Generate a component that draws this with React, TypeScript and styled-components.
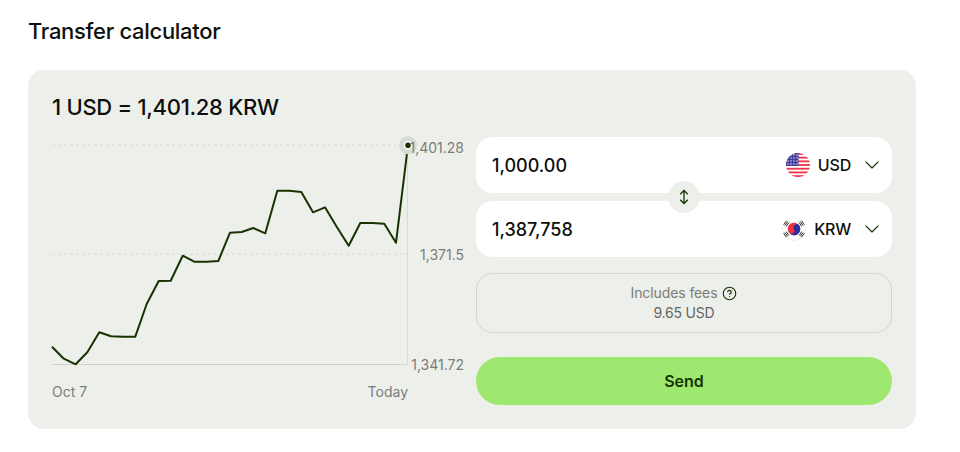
// App.tsx
import React from 'react';
import styled, { createGlobalStyle } from 'styled-components';
import { ChevronDown, CircleHelp } from 'lucide-react';

const GlobalStyle = createGlobalStyle`
  html, body {
    margin: 0;
    padding: 0;
    background: #fff;
    font-family: Inter, "Liberation Sans", sans-serif;
    color: #0e0f0c;
  }
  * {
    box-sizing: border-box;
  }
`;

const Page = styled.div`
  width: 960px;
  height: 452px;
  padding: 16px 44px 0 28px;
  overflow: hidden;
`;

const Title = styled.h1`
  margin: 0 0 24px;
  height: 30px;
  font-size: 22px;
  line-height: 30px;
  font-weight: 500;
  letter-spacing: -0.3px;
`;

const Card = styled.section`
  height: 359px;
  padding: 24px;
  background: #edefeb;
  border-radius: 16px;
`;

const Rate = styled.h2`
  margin: 0 0 17px;
  height: 26px;
  font-size: 22px;
  line-height: 26px;
  font-weight: 500;
  letter-spacing: -0.3px;
`;

const Columns = styled.div`
  display: grid;
  grid-template-columns: 412px 416px;
  column-gap: 12px;
`;

const Chart = styled.div`
  position: relative;
  display: flex;
  flex-direction: column;
`;

const Plot = styled.svg`
  display: block;
  width: 412px;
  height: 236px;
  overflow: visible;
`;

const YAxis = styled.div`
  position: absolute;
  top: 0;
  right: 0;
  height: 238px;
  display: flex;
  flex-direction: column;
  justify-content: space-between;
  align-items: flex-end;
  padding: 1px 0 0;
`;

const AxisLabel = styled.span<{ $lift?: number }>`
  font-size: 14px;
  line-height: 20px;
  color: #7b7d7a;
  margin-bottom: ${props => props.$lift ?? 0}px;
`;

const XAxis = styled.div`
  width: 356px;
  margin-top: 9px;
  display: flex;
  justify-content: space-between;
  font-size: 14px;
  line-height: 20px;
  color: #7b7d7a;
`;

const Form = styled.div`
  display: flex;
  flex-direction: column;
`;

const Inputs = styled.div`
  position: relative;
  display: flex;
  flex-direction: column;
  gap: 8px;
`;

const AmountRow = styled.div`
  height: 56px;
  padding: 0 8px 0 16px;
  display: flex;
  align-items: center;
  justify-content: space-between;
  background: #fff;
  border-radius: 16px;
`;

const Amount = styled.span`
  padding-top: 2px;
  font-size: 18px;
  font-weight: 500;
  line-height: 24px;
`;

const CurrencyPicker = styled.div`
  display: flex;
  align-items: center;
  gap: 8px;
  color: #163300;
`;

const CurrencyCode = styled.span`
  font-size: 16px;
  font-weight: 500;
  line-height: 20px;
  letter-spacing: -0.2px;
  color: #0e0f0c;
  margin-right: 1px;
`;

const Flag = styled.svg`
  display: block;
  width: 24px;
  height: 24px;
  border-radius: 50%;
`;

const SwapButton = styled.div`
  position: absolute;
  left: 192px;
  top: 44px;
  width: 32px;
  height: 32px;
  display: flex;
  align-items: center;
  justify-content: center;
  border-radius: 50%;
  background: #edefeb;
  color: #163300;
`;

const FeeBox = styled.div`
  height: 60px;
  margin-top: 16px;
  display: flex;
  flex-direction: column;
  align-items: center;
  justify-content: center;
  border: 1px solid #d3d5d1;
  border-radius: 16px;
  font-size: 14px;
  line-height: 20px;
`;

const FeeLabel = styled.div`
  display: flex;
  align-items: center;
  gap: 5px;
  color: #7b7d7a;
  letter-spacing: -0.1px;
  svg {
    color: #163300;
  }
`;

const FeeValue = styled.div`
  color: #646663;
  letter-spacing: -0.2px;
`;

const SendButton = styled.button`
  height: 48px;
  margin-top: 24px;
  border: 0;
  border-radius: 24px;
  background: #9fe870;
  color: #163300;
  font-family: inherit;
  font-size: 16px;
  font-weight: 600;
`;

// points read from the reference, relative to the chart's top left corner (52,137)
const points: [number, number][] = [
  [0, 209.7], [11.3, 221.3], [23.7, 227.3], [35.3, 215.3], [47.3, 195.3], [59, 199.3],
  [71, 199.7], [83.3, 199.7], [94.7, 167], [106.7, 144], [118.7, 143.7], [130.7, 118.7],
  [142.3, 124.7], [154.7, 124.7], [166.3, 124], [178, 95.7], [189.7, 95], [201.3, 91],
  [213.3, 96.3], [225.3, 53.7], [237.3, 53.7], [249.3, 55], [261, 75.3], [273, 70.3],
  [284.7, 89.7], [296.7, 108.7], [308.3, 86], [320.3, 86], [332.3, 86.7], [344, 105.7],
  [356, 8],
];

const UsFlag = () => (
  <Flag viewBox="0 0 24 24">
    <rect width="24" height="24" fill="#fff" />
    {[0, 2, 4, 6, 8, 10, 12].map(i => (
      <rect key={i} y={i * 1.85} width="24" height="1.85" fill="#f0364a" />
    ))}
    <rect width="12.5" height="12.9" fill="#3c3b9e" />
    {[2, 5, 8, 11].flatMap(y =>
      [2, 5, 8, 11].map(x => <circle key={`${x}-${y}`} cx={x} cy={y} r="0.7" fill="#fff" />)
    )}
  </Flag>
);

const KrFlag = () => (
  <Flag viewBox="0 0 24 24">
    <rect width="24" height="24" fill="#fff" />
    <circle cx="12" cy="12" r="11.5" fill="none" stroke="#eceeea" />
    {[-55, 55, 125, -125].map(angle => (
      <path
        key={angle}
        transform={`translate(12 12) rotate(${angle})`}
        d="M-2.4 -7.9h4.8M-2.4 -9.4h4.8M-2.4 -10.9h4.8"
        stroke="#333"
        strokeWidth="0.9"
      />
    ))}
    <g transform="translate(12 12) rotate(-30)">
      <circle r="6.3" fill="#ef3340" />
      <path d="M-6.3 0a3.15 3.15 0 0 0 6.3 0a3.15 3.15 0 0 1 6.3 0a6.3 6.3 0 0 1-12.6 0z" fill="#2b2f9b" />
    </g>
  </Flag>
);

const SwapIcon = () => (
  <svg width="16" height="16" viewBox="0 0 16 16" fill="none" stroke="currentColor" strokeWidth="1.3">
    <path d="M8 1.5v13M4.2 5.2L8 1.5l3.8 3.7M4.2 10.8L8 14.5l3.8-3.7" />
  </svg>
);

const App: React.FC = () => {
  const line = points.map(([x, y]) => `${x},${y}`).join(' ');

  return (
    <Page>
      <GlobalStyle />
      <Title>Transfer calculator</Title>
      <Card>
        <Rate>1 USD = 1,401.28 KRW</Rate>
        <Columns>
          <Chart>
            <Plot viewBox="0 0 412 236">
              <line x1="0" y1="8.2" x2="356" y2="8.2" stroke="#dcded9" strokeWidth="1.6" strokeDasharray="2.5 3.5" />
              <line x1="0" y1="117.2" x2="356" y2="117.2" stroke="#dcded9" strokeWidth="1.6" strokeDasharray="2.5 3.5" />
              <line x1="0" y1="227.5" x2="356" y2="227.5" stroke="#d0d2ce" />
              <line x1="355.5" y1="8" x2="355.5" y2="228" stroke="#d8dad6" />
              <polyline points={line} fill="none" stroke="#163300" strokeWidth="2" strokeLinejoin="round" />
              <circle cx="356" cy="8.3" r="9" fill="#d8dbd5" />
              <circle cx="356" cy="8.3" r="3.6" fill="#163300" stroke="#fff" strokeWidth="1.6" />
            </Plot>
            <YAxis>
              <AxisLabel>1,401.28</AxisLabel>
              <AxisLabel $lift={3}>1,371.5</AxisLabel>
              <AxisLabel>1,341.72</AxisLabel>
            </YAxis>
            <XAxis>
              <span>Oct 7</span>
              <span>Today</span>
            </XAxis>
          </Chart>
          <Form>
            <Inputs>
              <AmountRow>
                <Amount>1,000.00</Amount>
                <CurrencyPicker>
                  <UsFlag />
                  <CurrencyCode>USD</CurrencyCode>
                  <ChevronDown size={24} strokeWidth={1.1} />
                </CurrencyPicker>
              </AmountRow>
              <AmountRow>
                <Amount>1,387,758</Amount>
                <CurrencyPicker>
                  <KrFlag />
                  <CurrencyCode>KRW</CurrencyCode>
                  <ChevronDown size={24} strokeWidth={1.1} />
                </CurrencyPicker>
              </AmountRow>
              <SwapButton>
                <SwapIcon />
              </SwapButton>
            </Inputs>
            <FeeBox>
              <FeeLabel>
                Includes fees
                <CircleHelp size={15} strokeWidth={1.8} />
              </FeeLabel>
              <FeeValue>9.65 USD</FeeValue>
            </FeeBox>
            <SendButton>Send</SendButton>
          </Form>
        </Columns>
      </Card>
    </Page>
  );
};

export default App;
